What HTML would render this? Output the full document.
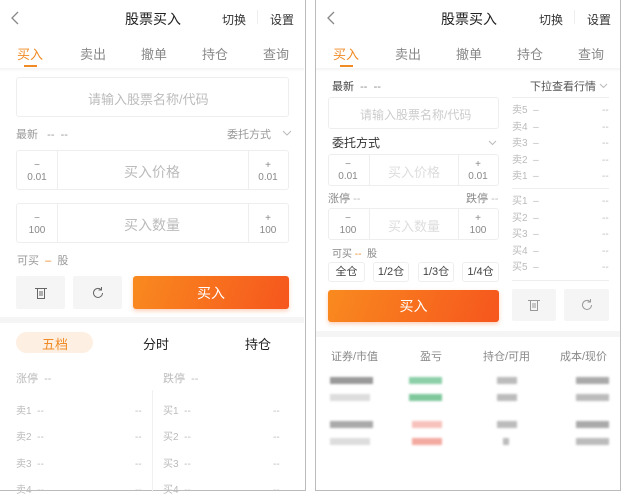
<!DOCTYPE html><html><head><meta charset="utf-8"><style>
*{margin:0;padding:0;box-sizing:border-box}
body{width:622px;height:492px;background:#fff;position:relative;overflow:hidden;font-family:"Liberation Sans","Noto Sans CJK SC",sans-serif;color:#333}
.a{position:absolute;white-space:nowrap}
.fr{position:absolute;border:1px solid #bbb}
.box{position:absolute;border:1px solid #eee;border-radius:3px}
.g{color:#bbb}.m{color:#888}.o{color:#f08a24}
.btn{position:absolute;background:#f5f5f5;border-radius:2px;display:flex;align-items:center;justify-content:center}
.buy{position:absolute;background:linear-gradient(110deg,#f98a1f,#f6561d);color:#fff;font-size:14px;display:flex;align-items:center;justify-content:center;border-radius:3px;box-shadow:0 2px 4px rgba(246,100,30,.3)}
.st{text-align:center;font-size:10px;color:#888;line-height:12px}
.blur{position:absolute;height:7px;filter:blur(1px)}
</style></head><body>
<div class="fr" style="left:-2px;top:-2px;width:308px;height:493px"></div>
<div class="fr" style="left:315px;top:-2px;width:306px;height:493px"></div>

<!-- LEFT -->
<svg class="a" style="left:10px;top:11px" width="10" height="14"><path d="M8 1L2 7l6 6" stroke="#888" stroke-width="1.3" fill="none"/></svg>
<div class="a" style="left:125px;top:9px;font-size:14px;color:#222">股票买入</div>
<div class="a" style="left:222px;top:11px;font-size:12px">切换</div>
<div class="a" style="left:257px;top:10px;width:1px;height:14px;background:#eee"></div>
<div class="a" style="left:270px;top:11px;font-size:12px">设置</div>
<div class="a o" style="left:17px;top:44px;font-size:13px">买入</div>
<div class="a m" style="left:80px;top:44px;font-size:13px">卖出</div>
<div class="a m" style="left:141px;top:44px;font-size:13px">撤单</div>
<div class="a m" style="left:202px;top:44px;font-size:13px">持仓</div>
<div class="a m" style="left:263px;top:44px;font-size:13px">查询</div>
<div class="a" style="left:24px;top:65px;width:13px;height:2px;background:#f08a24"></div>
<div class="a" style="left:0;top:68px;width:304px;height:4px;background:linear-gradient(#f4f4f4,#fff)"></div>
<div class="box" style="left:16px;top:77px;width:273px;height:40px"></div>
<div class="a g" style="left:88px;top:89px;font-size:13px">请输入股票名称/代码</div>
<div class="a" style="left:16px;top:126px;font-size:11px;color:#999">最新 &nbsp; -- &nbsp;--</div>
<div class="a" style="left:227px;top:126px;font-size:11px;color:#999">委托方式</div>
<svg class="a" style="left:282px;top:130px" width="10" height="6"><path d="M1 1l4 4 4-4" stroke="#bbb" fill="none"/></svg>
<div class="box" style="left:16px;top:150px;width:273px;height:40px"></div>
<div class="a" style="left:57px;top:150px;width:1px;height:40px;background:#eee"></div>
<div class="a" style="left:248px;top:150px;width:1px;height:40px;background:#eee"></div>
<div class="a st" style="left:24px;top:160px;width:26px">−<br>0.01</div>
<div class="a st" style="left:255px;top:160px;width:26px">+<br>0.01</div>
<div class="a g" style="left:124px;top:162px;font-size:14px">买入价格</div>
<div class="box" style="left:16px;top:203px;width:273px;height:40px"></div>
<div class="a" style="left:57px;top:203px;width:1px;height:40px;background:#eee"></div>
<div class="a" style="left:248px;top:203px;width:1px;height:40px;background:#eee"></div>
<div class="a st" style="left:24px;top:213px;width:26px">−<br>100</div>
<div class="a st" style="left:255px;top:213px;width:26px">+<br>100</div>
<div class="a g" style="left:124px;top:215px;font-size:14px">买入数量</div>
<div class="a" style="left:17px;top:252px;font-size:11px;color:#999">可买 <span class="o">&nbsp;–&nbsp;</span> 股</div>
<div class="btn" style="left:16px;top:276px;width:49px;height:33px"><svg width="14" height="14"><path d="M1 2.5h12M3.5 2.5v10h7v-10M6 5v5M8 5v5" stroke="#666" fill="none"/></svg></div>
<div class="btn" style="left:73px;top:276px;width:49px;height:33px"><svg width="14" height="14"><path d="M11.5 7a4.5 4.5 0 1 1-1.6-3.5M10.5 1v3H7.5" stroke="#666" fill="none"/></svg></div>
<div class="buy" style="left:133px;top:276px;width:156px;height:33px">买入</div>
<div class="a" style="left:0;top:317px;width:304px;height:6px;background:#f5f5f5"></div>
<div class="a" style="left:16px;top:332px;width:77px;height:21px;border-radius:11px;background:#fdf0e3"></div>
<div class="a o" style="left:42px;top:334px;font-size:13px">五档</div>
<div class="a" style="left:143px;top:334px;font-size:13px;color:#222">分时</div>
<div class="a" style="left:245px;top:334px;font-size:13px;color:#222">持仓</div>
<div class="a g" style="left:16px;top:370px;font-size:11px">涨停 &nbsp;--</div>
<div class="a g" style="left:163px;top:370px;font-size:11px">跌停 &nbsp;--</div>
<div class="a" style="left:152px;top:390px;width:1px;height:102px;background:#f0f0f0"></div>
<div class="a g" style="left:16px;top:399px;font-size:10px;line-height:26.3px">卖1 &nbsp;--<br>卖2 &nbsp;--<br>卖3 &nbsp;--<br>卖4 &nbsp;--</div>
<div class="a g" style="left:135px;top:399px;font-size:10px;line-height:26.3px">--<br>--<br>--<br>--</div>
<div class="a g" style="left:163px;top:399px;font-size:10px;line-height:26.3px">买1 &nbsp;--<br>买2 &nbsp;--<br>买3 &nbsp;--<br>买4 &nbsp;--</div>
<div class="a g" style="left:273px;top:399px;font-size:10px;line-height:26.3px">--<br>--<br>--<br>--</div>

<!-- RIGHT -->
<svg class="a" style="left:326px;top:11px" width="10" height="14"><path d="M8 1L2 7l6 6" stroke="#888" stroke-width="1.3" fill="none"/></svg>
<div class="a" style="left:441px;top:9px;font-size:14px;color:#222">股票买入</div>
<div class="a" style="left:539px;top:11px;font-size:12px">切换</div>
<div class="a" style="left:574px;top:10px;width:1px;height:14px;background:#eee"></div>
<div class="a" style="left:587px;top:11px;font-size:12px">设置</div>
<div class="a o" style="left:333px;top:44px;font-size:13px">买入</div>
<div class="a m" style="left:395px;top:44px;font-size:13px">卖出</div>
<div class="a m" style="left:456px;top:44px;font-size:13px">撤单</div>
<div class="a m" style="left:517px;top:44px;font-size:13px">持仓</div>
<div class="a m" style="left:578px;top:44px;font-size:13px">查询</div>
<div class="a" style="left:340px;top:65px;width:13px;height:2px;background:#f08a24"></div>
<div class="a" style="left:316px;top:68px;width:304px;height:4px;background:linear-gradient(#f4f4f4,#fff)"></div>
<div class="a" style="left:332px;top:78px;font-size:11px;color:#444">最新 &nbsp;<span class="m">-- &nbsp;--</span></div>
<div class="a" style="left:530px;top:78px;font-size:11px;color:#555">下拉查看行情</div>
<svg class="a" style="left:599px;top:83px" width="9" height="6"><path d="M1 1l3.5 3.5L8 1" stroke="#bbb" fill="none"/></svg>
<div class="box" style="left:328px;top:97px;width:171px;height:32px"></div>
<div class="a" style="left:360px;top:106px;font-size:12px;color:#ccc">请输入股票名称/代码</div>
<div class="a" style="left:332px;top:134px;font-size:12px;color:#333">委托方式</div>
<svg class="a" style="left:488px;top:140px" width="9" height="6"><path d="M1 1l3.5 3.5L8 1" stroke="#bbb" fill="none"/></svg>
<div class="box" style="left:328px;top:154px;width:171px;height:32px"></div>
<div class="a" style="left:369px;top:154px;width:1px;height:32px;background:#eee"></div>
<div class="a" style="left:458px;top:154px;width:1px;height:32px;background:#eee"></div>
<div class="a st" style="left:335px;top:159px;width:26px">−<br>0.01</div>
<div class="a st" style="left:465px;top:159px;width:26px">+<br>0.01</div>
<div class="a" style="left:388px;top:162px;font-size:13px;color:#ddd">买入价格</div>
<div class="a m" style="left:328px;top:190px;font-size:11px">涨停 <span class="g">--</span></div>
<div class="a m" style="left:466px;top:190px;font-size:11px">跌停 <span class="g">--</span></div>
<div class="box" style="left:328px;top:208px;width:171px;height:32px"></div>
<div class="a" style="left:369px;top:208px;width:1px;height:32px;background:#eee"></div>
<div class="a" style="left:458px;top:208px;width:1px;height:32px;background:#eee"></div>
<div class="a st" style="left:335px;top:213px;width:26px">−<br>100</div>
<div class="a st" style="left:465px;top:213px;width:26px">+<br>100</div>
<div class="a" style="left:388px;top:216px;font-size:13px;color:#ddd">买入数量</div>
<div class="a m" style="left:332px;top:245px;font-size:10px">可买 <span class="o">--</span> &nbsp;股</div>
<div class="box" style="left:328px;top:262px;width:37px;height:20px;font-size:11px;text-align:center;line-height:18px;color:#444">全仓</div>
<div class="box" style="left:373px;top:262px;width:36px;height:20px;font-size:11px;text-align:center;line-height:18px;color:#444">1/2仓</div>
<div class="box" style="left:418px;top:262px;width:36px;height:20px;font-size:11px;text-align:center;line-height:18px;color:#444">1/3仓</div>
<div class="box" style="left:462px;top:262px;width:37px;height:20px;font-size:11px;text-align:center;line-height:18px;color:#444">1/4仓</div>
<div class="buy" style="left:328px;top:290px;width:171px;height:32px">买入</div>
<div class="a" style="left:512px;top:97px;width:97px;height:1px;background:#eee"></div>
<div class="a g" style="left:512px;top:103px;font-size:10px;line-height:16.5px">卖5 &nbsp;–<br>卖4 &nbsp;–<br>卖3 &nbsp;–<br>卖2 &nbsp;–<br>卖1 &nbsp;–</div>
<div class="a g" style="left:602px;top:103px;font-size:10px;line-height:16.5px">--<br>--<br>--<br>--<br>--</div>
<div class="a" style="left:512px;top:188px;width:97px;height:1px;background:#eee"></div>
<div class="a g" style="left:512px;top:194px;font-size:10px;line-height:16.5px">买1 &nbsp;–<br>买2 &nbsp;–<br>买3 &nbsp;–<br>买4 &nbsp;–<br>买5 &nbsp;–</div>
<div class="a g" style="left:602px;top:194px;font-size:10px;line-height:16.5px">--<br>--<br>--<br>--<br>--</div>
<div class="a" style="left:512px;top:280px;width:97px;height:1px;background:#eee"></div>
<div class="btn" style="left:512px;top:289px;width:44px;height:32px"><svg width="14" height="14"><path d="M1 2.5h12M3.5 2.5v10h7v-10M6 5v5M8 5v5" stroke="#999" fill="none"/></svg></div>
<div class="btn" style="left:564px;top:289px;width:45px;height:32px"><svg width="14" height="14"><path d="M11.5 7a4.5 4.5 0 1 1-1.6-3.5M10.5 1v3H7.5" stroke="#999" fill="none"/></svg></div>
<div class="a" style="left:316px;top:331px;width:304px;height:6px;background:#f5f5f5"></div>
<div class="a m" style="left:331px;top:348px;font-size:11px">证券/市值</div>
<div class="a m" style="left:420px;top:348px;font-size:11px">盈亏</div>
<div class="a m" style="left:483px;top:348px;font-size:11px">持仓/可用</div>
<div class="a m" style="left:560px;top:348px;font-size:11px">成本/现价</div>
<div class="blur" style="left:330px;top:377px;width:43px;background:#999"></div>
<div class="blur" style="left:330px;top:394px;width:40px;background:#ddd"></div>
<div class="blur" style="left:409px;top:377px;width:33px;background:#8ccfa8"></div>
<div class="blur" style="left:409px;top:394px;width:33px;background:#7ec89c"></div>
<div class="blur" style="left:497px;top:377px;width:20px;background:#bbb"></div>
<div class="blur" style="left:497px;top:394px;width:20px;background:#bbb"></div>
<div class="blur" style="left:576px;top:377px;width:33px;background:#aaa"></div>
<div class="blur" style="left:576px;top:394px;width:33px;background:#bbb"></div>
<div class="blur" style="left:330px;top:421px;width:43px;background:#aaa"></div>
<div class="blur" style="left:330px;top:438px;width:40px;background:#ddd"></div>
<div class="blur" style="left:412px;top:421px;width:30px;background:#f7c2bb"></div>
<div class="blur" style="left:412px;top:438px;width:30px;background:#f3aaa0"></div>
<div class="blur" style="left:497px;top:421px;width:20px;background:#bbb"></div>
<div class="blur" style="left:503px;top:438px;width:6px;background:#bbb"></div>
<div class="blur" style="left:576px;top:421px;width:33px;background:#aaa"></div>
<div class="blur" style="left:576px;top:438px;width:33px;background:#bbb"></div>
</body></html>
